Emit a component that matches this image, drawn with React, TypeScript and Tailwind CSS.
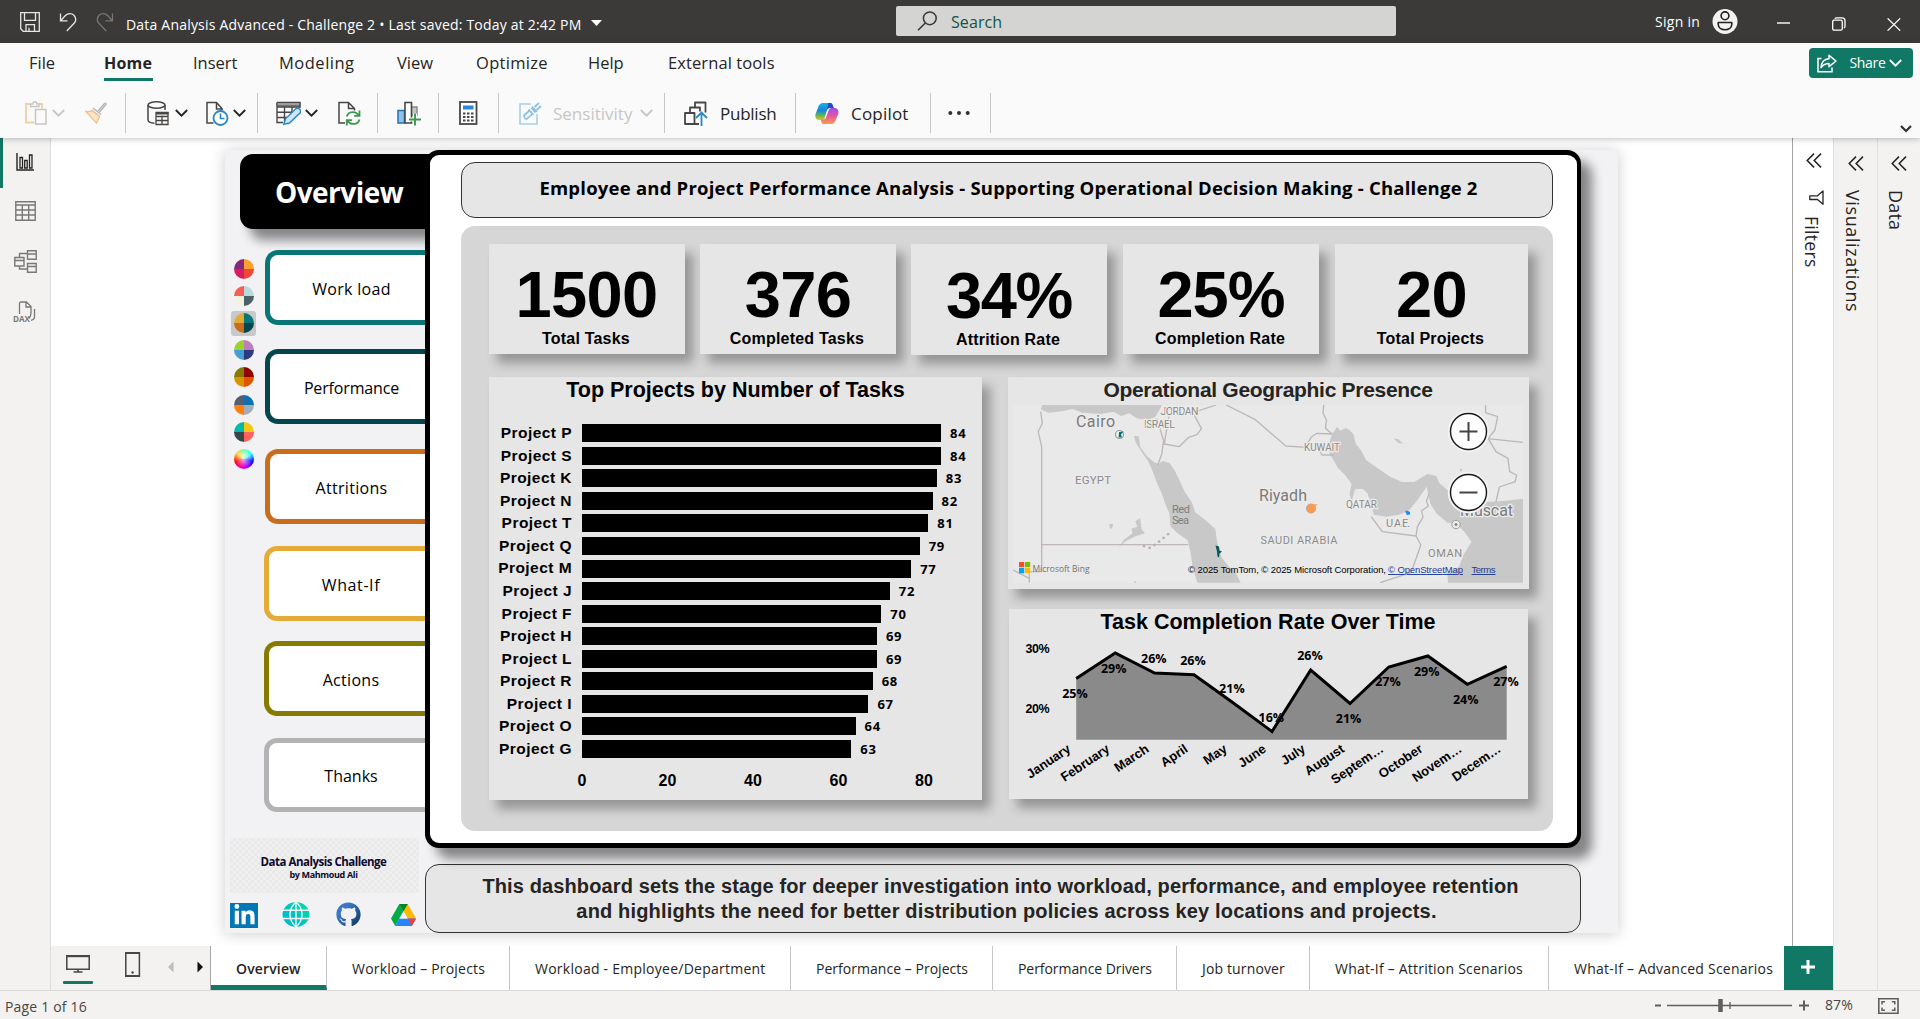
import React from "react";
import { FaGithub, FaLinkedinIn } from "react-icons/fa";

const OPEN = "font-['Open_Sans',sans-serif]";
const ARIAL = "font-['Liberation_Sans',sans-serif]";

type SvgProps = { w: number; h: number; children: React.ReactNode; className?: string };
const Svg = ({ w, h, children, className = "" }: SvgProps) => (
  <svg width={w} height={h} viewBox={`0 0 ${w} ${h}`} fill="none" className={`shrink-0 ${className}`}>
    {children}
  </svg>
);

/* ---------- Title bar ---------- */
function TitleBar() {
  return (
    <header className="flex h-[43px] shrink-0 items-start bg-[#3b3a39] text-white">
      <Svg w={20} h={20} className="mt-[12px] ml-[20px]">
        <path d="M.7.7h18.6v18.6H3.2L.7 16.8z M4.5.7v7.6h11V.7 M6 19.3v-6.6h8.5v6.6 M9 19v-3.3" stroke="#e6e6e6" strokeWidth="1.3" />
      </Svg>
      <Svg w={18} h={20} className="mt-[12px] ml-[19px]">
        <path d="M1.5 1.5v7.3h7 M1.8 8.5l4.6-5C9 1 12.800 1 14.900 3.300c2.100 2.400 2.200 5.700.200 8L7.800 19" stroke="#e6e6e6" strokeWidth="1.3" />
      </Svg>
      <Svg w={18} h={20} className="mt-[12px] ml-[19px]">
        <path d="M16.500 1.500v7.300h-7 M16.200 8.500l-4.600-5C9 1 5.200 1 3.100 3.300c-2.100 2.400-2.200 5.700-.200 8L10.200 19" stroke="#777674" strokeWidth="1.3" />
      </Svg>
      <span className="mt-[14px] ml-[12px] w-[464px] text-[14px] leading-[21px] tracking-[0.2px] whitespace-nowrap">
        Data Analysis Advanced - Challenge 2 • Last saved: Today at 2:42 PM
      </span>
      <Svg w={11} h={6} className="mt-[20px] ml-[1px]">
        <path d="M0 0h11L5.500 6z" fill="#fff" />
      </Svg>
      <div className="mt-[6px] ml-[294px] flex h-[30px] w-[500px] items-center rounded-[2px] bg-[#d4d4d2] pl-[21px]">
        <Svg w={21} h={20}>
          <circle cx="12.800" cy="7.300" r="6.400" stroke="#3b3a39" strokeWidth="1.500" />
          <path d="M8.300 12L1 19.300" stroke="#3b3a39" strokeWidth="1.600" />
        </Svg>
        <span className="ml-[13px] pt-px text-[16px] leading-[30px] tracking-[0.1px] text-[#0f5548]">Search</span>
      </div>
      <span className="mt-[11px] ml-[259px] w-[46px] text-[14px] leading-[22px] tracking-[0.3px] whitespace-nowrap">Sign in</span>
      <Svg w={26} h={26} className="mt-[9px] ml-[11px]">
        <circle cx="13" cy="12.500" r="12.500" fill="#f3f2f1" />
        <circle cx="13" cy="6.800" r="3.900" stroke="#222" strokeWidth="1.600" />
        <path d="M6.200 13.500h13.600v1.800c0 7.200-13.600 7.200-13.600 0z" stroke="#222" strokeWidth="1.600" strokeLinejoin="round" />
      </Svg>
      <Svg w={13} h={2} className="mt-[22px] ml-[39px]">
        <path d="M0 1h13" stroke="#fff" strokeWidth="1.400" />
      </Svg>
      <Svg w={14} h={14} className="mt-[17px] ml-[42px]">
        <rect x=".7" y="3.200" width="9.600" height="10" rx="1.500" stroke="#fff" strokeWidth="1.300" />
        <path d="M3 1.700Q3.300.8 4.500.8h5.500q3 0 3 3v5.500q0 1.200-1 1.700" stroke="#fff" strokeWidth="1.300" />
      </Svg>
      <Svg w={14} h={13} className="mt-[18px] ml-[41px]">
        <path d="M.6.4l12.600 12.200M13.200.4L.6 12.600" stroke="#fff" strokeWidth="1.300" />
      </Svg>
    </header>
  );
}

/* ---------- Ribbon ---------- */
const Chevron = ({ color = "#252423", className = "" }) => (
  <Svg w={13} h={8} className={className}>
    <path d="M.8 1l5.700 5.700L12.200 1" stroke={color} strokeWidth="1.800" />
  </Svg>
);
const Divider = ({ className = "" }) => <span className={`h-[40px] w-px shrink-0 bg-[#c8c6c4] ${className}`} />;

function MenuRow() {
  const item = "shrink-0 whitespace-nowrap";
  return (
    <nav className="flex h-[40px] items-start pl-[29px] text-[16.500px] leading-[40px] text-[#252423]">
      <span className={`${item} w-[75px]`}>File</span>
      <span className={`${item} w-[89px]`}>
        <span className="flex w-[49px] flex-col">
          <span className="h-[35px] text-[16px] font-bold tracking-[0.2px]">Home</span>
          <span className="h-[3px] bg-[#117865]" />
        </span>
      </span>
      <span className={`${item} w-[86px]`}>Insert</span>
      <span className={`${item} w-[118px] tracking-[0.5px]`}>Modeling</span>
      <span className={`${item} w-[79px]`}>View</span>
      <span className={`${item} w-[112px] tracking-[0.3px]`}>Optimize</span>
      <span className={`${item} w-[80px]`}>Help</span>
      <span className={`${item} tracking-[0.100px]`}>External tools</span>
      <button className="mt-[5px] mr-[7px] ml-auto flex h-[30px] w-[104px] items-center rounded-[4px] bg-[#117865] pl-[8px] text-[14px] leading-[30px] text-white">
        <Svg w={20} h={19}>
          <path d="M4.500 4.500H1v13.300h14v-4.300" stroke="#fff" strokeWidth="1.500" />
          <path d="M12 1.300l7 5.700-7 5.700V9.500c-3.600 0-6 1-8 4.200.300-5 3-8.600 8-9z" stroke="#fff" strokeWidth="1.500" strokeLinejoin="round" />
        </Svg>
        <span className="ml-[9px] w-[43px] tracking-[-0.300px]">Share</span>
        <Chevron color="#fff" className="mr-[9px]" />
      </button>
    </nav>
  );
}

function ToolRow() {
  const k = "#484644";
  return (
    <div className="flex h-[55px] items-start pt-[10px]">
      <div className="flex h-[40px] items-center pl-[25px] text-[17px] text-[#252423]">
        <Svg w={22} h={24}>
          <path d="M5.500 3H1v18.500h8 M13.500 3H17v4.500" stroke="#f0cfa6" strokeWidth="1.800" />
          <path d="M5.500 5.500V3h2.300c0-3 4-3 4 0H14v2.500z" stroke="#c8c6c4" strokeWidth="1.300" />
          <rect x="10.500" y="8.500" width="10.500" height="14.500" fill="#fafafa" stroke="#c8c6c4" strokeWidth="1.500" />
        </Svg>
        <Chevron color="#c8c6c4" className="ml-[5px]" />
        <Svg w={22} h={22} className="ml-[20px]">
          <path d="M13 9l6.500-7.500q1.500-.800 1.500 1L14.500 10 M8 6l8 6.500 M6.500 8l8 6.500" stroke="#b8b6b4" strokeWidth="1.400" />
          <path d="M7 8.500l7.500 6-3 6.500L.8 9.500q3.500.800 6.200-1z" fill="#fbe6cd" stroke="#eebf8c" strokeWidth="1.300" />
        </Svg>
        <Divider className="ml-[18px]" />
        <Svg w={22} h={25} className="ml-[21px]">
          <ellipse cx="9.500" cy="4" rx="8.500" ry="3.200" stroke={k} strokeWidth="1.500" />
          <path d="M1 4v15c0 1.800 3 3 6.500 3.200 M18 4v5" stroke={k} strokeWidth="1.500" />
          <path d="M9 11.500h12v12H9z M9 15.500h12 M9 19.500h12 M15 14.500v9" stroke={k} strokeWidth="1.300" fill="#fafafa" />
          <path d="M9 11h12.500v2.500H9z" fill={k} />
        </Svg>
        <Chevron className="ml-[6px]" />
        <Svg w={23} h={25} className="ml-[18px]">
          <path d="M7.500 22H1V1.500h9.500l5.500 6V9.500 M10.500 1.500v6.500H16" stroke={k} strokeWidth="1.500" />
          <circle cx="14.500" cy="17" r="7" fill="#fff" stroke="#2b88c8" strokeWidth="1.800" />
          <path d="M14.500 12.500V17.500H18.500" stroke="#2b88c8" strokeWidth="1.600" />
        </Svg>
        <Chevron className="ml-[4px]" />
        <Divider className="ml-[11px]" />
        <Svg w={25} h={25} className="ml-[18px]">
          <path d="M1 1.500h23v5.500M1 1.500v20h6 M1 6h23 M1 11.300h16 M1 16.500h10 M8.500 6v14 M16 6v6" stroke={k} strokeWidth="1.400" />
          <path d="M1 1.500h23V5H1z" fill="#a19f9d" stroke={k} />
          <path d="M7.800 23.300l1.700-5.500L20 7.500q2-1 3.700.800t.500 3.400L13.500 22z" fill="#cfe6f7" stroke="#2b88c8" strokeWidth="1.500" />
        </Svg>
        <Chevron className="ml-[4px]" />
        <Svg w={23} h={25} className="ml-[20px]">
          <path d="M7 22H1V1.500h9.500l6 6V9.500 M10.500 1.500v6H16.500" stroke={k} strokeWidth="1.500" />
          <path d="M8.800 15.500c1.500-5.500 9-6 12-1 M21.500 9.500v5.300h-5.300 M21.500 18.500c-1.500 5.500-9 6-12 1 M8.800 24.500v-5.300h5.300" stroke="#3b9a4e" strokeWidth="1.800" />
        </Svg>
        <Divider className="ml-[16px]" />
        <Svg w={24} h={25} className="ml-[19px]">
          <path d="M1 9.500h6.500V22H1z" fill="#8cc3ec" stroke="#2272b9" strokeWidth="1.500" />
          <path d="M13 6h7v8h-7z" fill="#c8c6c4" stroke="#8a8886" strokeWidth="1.400" />
          <path d="M8 1.500h6.500V22H8z" fill="#fff" stroke={k} strokeWidth="1.600" />
          <path d="M18 12.500V25 M12 18.500h12" stroke="#fafafa" strokeWidth="4" />
          <path d="M18 12.500V24.500 M12 18.500h12" stroke="#3b9a4e" strokeWidth="1.900" />
        </Svg>
        <Divider className="ml-[17px]" />
        <Svg w={19} h={24} className="ml-[20px]">
          <rect x="1" y="1" width="16.500" height="22" stroke={k} strokeWidth="1.800" fill="#fff" />
          <rect x="4" y="4.500" width="10.500" height="4" fill="#2b88d8" />
          <path d="M4 12.500h2.500m1.500 0h2.500m1.500 0h2.500 M4 16h2.500m1.500 0h2.500m1.500 0h2.500 M4 19.500h2.500m1.500 0h2.500m1.500 0h2.500" stroke={k} strokeWidth="2.200" />
        </Svg>
        <Divider className="ml-[20px]" />
        <Svg w={23} h={25} className="ml-[20px]">
          <path d="M12 3H1v20h17V13" stroke="#a9cfe8" strokeWidth="1.600" />
          <path d="M5 14.500l5.500-5 3 3.300-5.500 5q-2.500.500-3-3.300z M9.500 8.500l5 5.500 M12.500 7l4 4.500 M13 5.500l5 5.500 M15.500 6l4.500-4 M17.500 9l4.500-4" stroke="#8dbfe0" strokeWidth="1.700" />
        </Svg>
        <span className="ml-[11px] w-[80px] pt-px whitespace-nowrap text-[#c8c6c4]">Sensitivity</span>
        <Chevron color="#c8c6c4" className="ml-[7px]" />
        <Divider className="ml-[11px]" />
        <Svg w={24} h={25} className="ml-[19px]">
          <path d="M11 5.500V1.500h10.500v10 M6 11.500V6.500h10v4 M1 12h9.500v11H1z M10.500 23h4.500" stroke={k} strokeWidth="1.800" strokeLinejoin="round" />
          <path d="M17.500 25V12 M12 17l5.500-5.500L23 17" stroke="#2b88c8" strokeWidth="1.800" />
        </Svg>
        <span className="ml-[12px] w-[57px] pt-px tracking-[-0.250px]">Publish</span>
        <Divider className="ml-[18px]" />
        <Svg w={24} h={23} className="ml-[19px]">
          <defs>
            <linearGradient id="cpA" x1="0" y1="0" x2="0" y2="1">
              <stop offset="0" stopColor="#15b0e8" />
              <stop offset=".45" stopColor="#1b85d8" />
              <stop offset=".75" stopColor="#5dbb52" />
              <stop offset="1" stopColor="#f3c21b" />
            </linearGradient>
            <linearGradient id="cpB" x1="0" y1="0" x2="0" y2="1">
              <stop offset="0" stopColor="#9a50e8" />
              <stop offset=".5" stopColor="#e8559f" />
              <stop offset="1" stopColor="#f9a04a" />
            </linearGradient>
          </defs>
          <path d="M7.500 1h8.300q1.500.400 2 2.500l1 2.500H14q-1.500.300-2 2L9.500 16.500q-.600 1.500-2.500 1.500H3.500Q-.500 17 .6 12L3.800 3.500Q5 1 7.500 1z" fill="url(#cpA)" />
          <path d="M13 1h2.800q1.500.400 2 2.500l1 2.500H14.500q-1.500.100-2.200 2z" fill="#1f4fc4" />
          <path d="M16.500 22H8.200q-1.500-.400-2-2.500L5.500 17.500H9q1.500-.300 2-2L14 7.500Q14.600 6 16.500 6h4q3.500 1 2.900 5.500L20.200 19.500Q19 22 16.500 22z" fill="url(#cpB)" />
        </Svg>
        <span className="ml-[12px] w-[59px] pt-px tracking-[0.200px]">Copilot</span>
        <Divider className="ml-[20px]" />
        <Svg w={22} h={5} className="ml-[17px]">
          <circle cx="2.300" cy="2" r="2" fill="#323130" />
          <circle cx="11" cy="2" r="2" fill="#323130" />
          <circle cx="19.700" cy="2" r="2" fill="#323130" />
        </Svg>
        <Divider className="ml-[20px]" />
      </div>
      <Svg w={12} h={8} className="mt-[32px] mr-[8px] ml-auto">
        <path d="M1 1l5 5 5-5" stroke="#323130" strokeWidth="2.200" />
      </Svg>
    </div>
  );
}

/* ---------- Left rail ---------- */
function LeftRail() {
  return (
    <aside className="flex w-[51px] shrink-0 flex-col border-r border-[#dedcda] bg-[#f3f2f1]">
      <div className="h-[50px] border-l-[3px] border-[#117865] pt-[15px] pl-[13px]">
        <Svg w={18} h={18}>
          <path d="M1 0v17h17" stroke="#252423" strokeWidth="1.400" />
          <path d="M4 4.500h2.500V15H4z M8.700 7.500h2.500V15H8.700z M13.500 2H16v13h-2.500z" stroke="#252423" strokeWidth="1.300" />
        </Svg>
      </div>
      <Svg w={21} h={20} className="mt-[13px] ml-[15px]">
        <path d="M.8.8h19.400v18.400H.8z M.8 4h19.400 M.8 9h19.400 M.8 14h19.400 M7.300 4v15 M13.700 4v15" stroke="#7a7876" strokeWidth="1.400" />
      </Svg>
      <Svg w={23} h={23} className="mt-[29px] ml-[14px]">
        <path d="M.8 7.500h9.200v8.500H.8z M.8 10.500H10 M13.500 .8h8.700v8.400h-8.700z M13.500 4h8.700 M13.500 13.500h8.700v8.700h-8.700z M13.500 16.500h8.700 M5.500 7.500V3.500h8 M5.500 16v3h8" stroke="#7a7876" strokeWidth="1.400" />
      </Svg>
      <div className="mt-[28px] ml-[13px] flex h-[22px] w-[24px]">
        <Svg w={24} h={22}>
          <path d="M6.500 13V2.500Q6.500 1 8 1h5.500L18 5.500V12q0 3-2 5.500 M13 1v5h5 M21.500 8v8q0 2.500-3.500 3.300" stroke="#7a7876" strokeWidth="1.300" />
          <text x="0" y="20.500" fontSize="8" fontWeight="700" fill="#7a7876" textLength="17" lengthAdjust="spacingAndGlyphs" fontFamily="Open Sans">DAX</text>
        </Svg>
      </div>
    </aside>
  );
}

/* ---------- Report page: sidebar ---------- */
const themes: [string, string][] = [
  ["bg-[conic-gradient(#fb9f2e_0_25%,#f1473a_0_50%,#d91c62_0_75%,#86277a_0)]", ""],
  ["bg-[conic-gradient(#b9dada_0_25%,#4b6068_0_50%,#eff3df_0_75%,#f65f57_0)]", ""],
  ["bg-[conic-gradient(#0a7577_0_25%,#04464b_0_50%,#c96c1c_0_75%,#e3ac38_0)]", "bg-[#c8c8c8]"],
  ["bg-[conic-gradient(#c07dbc_0_25%,#2e3a80_0_50%,#459fd2_0_75%,#9cd134_0)]", ""],
  ["bg-[conic-gradient(#930000_0_25%,#e05500_0_50%,#d99200_0_75%,#867a00_0)]", ""],
  ["bg-[conic-gradient(#0f72b0_0_25%,#a3acba_0_50%,#ff7f0e_0_75%,#555f70_0)]", ""],
  ["bg-[conic-gradient(#f2c811_0_25%,#fd625e_0_50%,#374649_0_75%,#01b8aa_0)]", ""],
  ["bg-[radial-gradient(circle_at_50%_40%,#ffffffd0,#ffffff00_65%),conic-gradient(#5f8,#0ff,#00f,#a0f,#f0a,#f00,#fc0,#5f8)]", ""],
];

const navItems: [string, string][] = [
  ["Work load", "mt-[21px] border-[#0a7577] tracking-[0.300px]"],
  ["Performance", "mt-[24.500px] border-[#04464b] tracking-[-0.150px]"],
  ["Attritions", "mt-[25.500px] border-[#c96c1c] tracking-[0.300px]"],
  ["What-If", "-ml-px mt-[22.500px] border-[#e3ac38] tracking-[0.600px]"],
  ["Actions", "-ml-px mt-[20.500px] border-[#867a00] tracking-[0.300px]"],
  ["Thanks", "-ml-px mt-[22px] border-[#b3b3b3]"],
];

function ReportSidebar() {
  return (
    <div className="flex w-[200px] shrink-0 flex-col">
      <div className="mt-[4px] ml-[15px] flex h-[75px] w-[216px] shrink-0 items-center rounded-[13px] bg-black pl-[35px] text-[28px] font-bold tracking-[-0.550px] text-white shadow-[10px_11px_11px_rgba(0,0,0,0.450)]">
        <span className="mt-[1px]">Overview</span>
      </div>
      <div className="flex h-[609px]">
        <div className="flex w-[39px] shrink-0 flex-col items-start pt-[26.500px] pl-[6px]">
          {themes.map(([grad, sel], i) => (
            <div key={i} className="flex h-[27.100px] w-[25px] items-center">
              <div className={`flex h-[25px] w-[25px] items-center justify-center rounded-[3px] ${sel}`}>
                <div className={`h-[20px] w-[20px] rounded-full ${grad}`} />
              </div>
            </div>
          ))}
        </div>
        <div className="flex w-[161px] flex-col pl-px">
          {navItems.map(([label, cls]) => (
            <div key={label} className={`flex h-[74.500px] shrink-0 items-center justify-center rounded-l-[13px] border-[5px] border-r-0 bg-white pt-[3px] pl-[8px] text-[16px] text-black ${cls}`}>
              {label}
            </div>
          ))}
        </div>
      </div>
      <div className="ml-[5px] flex h-[55px] w-[189px] flex-col items-center bg-[repeating-conic-gradient(#e9e9ea_0_25%,#efeff0_0_50%)] bg-[length:6px_6px] pt-[15px] pr-[2px] font-bold text-[#0c0a2e]">
        <span className="text-[11.500px] leading-[17px] tracking-[-0.500px] whitespace-nowrap">Data Analysis Challenge</span>
        <span className="text-[9px] leading-[10px] tracking-[-0.350px] whitespace-nowrap">by Mahmoud Ali</span>
      </div>
      <div className="mt-[9px] flex items-start pl-[5px]">
        <div className="mt-px flex h-[25px] w-[28px] items-center justify-center bg-[#0277b5] text-white">
          <FaLinkedinIn size={23} />
        </div>
        <Svg w={28} h={25} className="ml-[24px]">
          <defs>
            <linearGradient id="globe" x1="0" y1="1" x2="1" y2="0">
              <stop offset="0" stopColor="#00aee0" />
              <stop offset="1" stopColor="#04df9a" />
            </linearGradient>
          </defs>
          <ellipse cx="14" cy="12.500" rx="13.500" ry="12.500" fill="url(#globe)" />
          <path d="M0 8.300h28 M0 16.500h28 M14 0v25 M14 0C6 7 6 18 14 25 M14 0c8 7 8 18 0 25" stroke="#f2f2f5" strokeWidth="1.400" />
        </Svg>
        <Svg w={0} h={0}>
          <defs>
            <linearGradient id="gh" x1="0" y1="0" x2="1" y2="1">
              <stop offset=".3" stopColor="#3c78c8" />
              <stop offset=".9" stopColor="#123d66" />
            </linearGradient>
          </defs>
        </Svg>
        <FaGithub size={25} className="ml-[26px] fill-[url(#gh)]" />
        <Svg w={25} h={22} className="mt-[2px] ml-[29.500px]">
          <path d="M8.300 0h8.400L8.500 14.500 4.200 22 0 14.500z" fill="#00ac47" />
          <path d="M16.700 0L25 14.500h-8.400L8.300 0z" fill="#ffba00" />
          <path d="M8.300 0h8.400l-4.200 7.300z" fill="#00832d" />
          <path d="M8.500 14.500H25L20.800 22H4.200z" fill="#2684fc" />
          <path d="M16.600 14.500H25L20.800 22z" fill="#ea4335" />
          <path d="M12.500 7.300l4.100 7.200H8.400z" fill="#f2f2f5" />
        </Svg>
      </div>
    </div>
  );
}

/* ---------- Report page: visuals ---------- */
const cardShadow = "shadow-[8px_9px_10px_rgba(0,0,0,0.300)]";

const kpis: [string, string, string, string][] = [
  ["1500", "Total Tasks", "w-[196px] h-[110px]", "tracking-[-0.600px] pr-px"],
  ["376", "Completed Tasks", "w-[196px] h-[110px] ml-[15px]", "tracking-[-0.600px]"],
  ["34%", "Attrition Rate", "w-[196px] h-[111px] ml-[15px] pt-px", "tracking-[-1.300px]"],
  ["25%", "Completion Rate", "w-[196px] h-[110px] ml-[16px]", "tracking-[-1px]"],
  ["20", "Total Projects", "w-[193px] h-[110px] ml-[16px]", "tracking-[-0.600px]"],
];

const projects: [string, number][] = [
  ["P", 84], ["S", 84], ["K", 83], ["N", 82], ["T", 81], ["Q", 79], ["M", 77], ["J", 72],
  ["F", 70], ["H", 69], ["L", 69], ["R", 68], ["I", 67], ["O", 64], ["G", 63],
];

function BarChart() {
  return (
    <div className={`flex h-[423px] w-[493px] shrink-0 flex-col bg-[#e6e6e6] font-bold text-black ${ARIAL} ${cardShadow}`}>
      <h2 className="text-center text-[21.500px] leading-[26px]">Top Projects by Number of Tasks</h2>
      <div className="mt-[19px] flex flex-col">
        {projects.map(([name, v]) => (
          <div key={name} className="flex h-[22.550px] items-center">
            <span className="w-[83px] pb-px text-right text-[15.500px] tracking-[0.450px] whitespace-nowrap">Project {name}</span>
            <div className="ml-[10px] h-[18px] bg-black" style={{ width: v * 4.275 }} />
            <span className={`ml-[9px] text-[13px] leading-[18px] tracking-[0.700px] ${OPEN}`}>{v}</span>
          </div>
        ))}
      </div>
      <div className="mt-[11px] ml-[50.250px] flex text-[16px] leading-[20px]">
        {[0, 20, 40, 60, 80].map((t) => (
          <span key={t} className="w-[85.500px] text-center">{t}</span>
        ))}
      </div>
    </div>
  );
}

function MapCard() {
  const halo = { stroke: "#ececec", strokeWidth: 2.5, paintOrder: "stroke" as const };
  return (
    <div className={`flex h-[212px] w-[521px] flex-col items-center bg-[#e6e6e6] ${cardShadow}`}>
      <h2 className={`pb-[2px] text-center text-[21px] leading-[26px] font-bold tracking-[-0.300px] text-[#252423] ${ARIAL}`}>Operational Geographic Presence</h2>
      <svg width="510" height="178" viewBox="1013 405 510 178" className="shrink-0 bg-[#e9e9e9]">
        <g transform="translate(1000 370) scale(0.34439 0.33333)">
          <g fill="#c8c8c8">
            <path d="M88 105h35L118 118 140 128 180 124 210 117 240 128 290 132 330 125 352 138 375 130 400 146 430 149 450 142 462 122 470 105z" />
            <path d="M388 197l7 22 17 28 18 26 13 30 12 34 15 34 10 30 12 30 3 38 20 20 30 22 8 34 6 44 14 49h126l-18-35-18-14-20-28-12-42-6-42-30-28-28-22-10-30-20-30-15-34-15-32-15-22-20-6-12 9-13-5-20-18-20-28-4-32z" />
            <path d="M965 192l14-22 8 12 10-4 8-4 10 6 12 14 6 28 16 20 14 28 36 26 34 24 34 16h36l38-24 26 6 8 20 26 24 8 26 32 14 60-5 70-5 49-6V638h-219l-2-30 34-18 12-34 24-40-20-30-26-26-24-2-32-28-18-30-6-30-4-20-24 36-26 34-30 14-38 6-36-6-8-34-10-30-14-14-22 2-10 36-6-22 6-30-20-28-20-20-24-44-4-24z" />
            <path d="M345 532l14-22 26-20-4-14 18-6-6-16 14-10 4 34 10 12-26 8-30 16z" />
            <path d="M317 462l12 0-4 14-6-2z M1143 205l14 3 14 14-16-4z M1335 296l6 0 0 8-5 0z M1390 150l10-8 0 5z" />
          </g>
          <g stroke="#bdb7ba" strokeWidth="3.900" fill="none" strokeLinejoin="round">
            <path d="M118 125l5 35-12 25 10 45v375 M121 524H547 M38 600l47 25v13 M85 638v-33h36" />
            <path d="M455 145l20 66-5 40-12 34 M490 140l-13 82 43 8 28-28 24-8 13-18-25-48 68-23 M657 105l83 43 90 80 60 4" />
            <path d="M940 105l-2 25 10 20-3 25 20 18 M885 232l20-32 15-10 44 2 M920 230l15 25h35" />
            <path d="M1410 105v23l35 12-8 40-20 26 54 6 48 5 M1418 206l22 39 35 20 5 40 20 10-4 20-46 16-10 45" />
            <path d="M1078 440l32 45 98 13 14 27-28 82-90 31 M1208 498l4-28 16-28-4-20 20-14-6-14 8-24" />
            <path d="M392 634v4" />
          </g>
          <path d="M418 528l18 6 22-16 40-34" stroke="#b7b1b4" strokeWidth="8" strokeLinecap="round" strokeDasharray="0.100 17" fill="none" />
        </g>
        <g fontFamily="Roboto" fill="#8a8a8a" {...halo}>
          <text x="1160.500" y="414.500" fontSize="10.500" textLength="38">JORDAN</text>
          <text x="1144" y="427.500" fontSize="10.500" textLength="31">ISRAEL</text>
          <text x="1304" y="451" fontSize="11" textLength="36" lengthAdjust="spacingAndGlyphs">KUWAIT</text>
          <text x="1075" y="484" fontSize="11.500" textLength="36">EGYPT</text>
          <text x="1346" y="508" fontSize="11" textLength="31" lengthAdjust="spacingAndGlyphs">QATAR</text>
          <text x="1386" y="527" fontSize="11" textLength="24">U.A.E.</text>
          <text x="1260.500" y="543.500" fontSize="11" textLength="77">SAUDI ARABIA</text>
          <text x="1428" y="556.500" fontSize="11" textLength="34">OMAN</text>
          <g stroke="none" fill="#7d7d7d">
            <text x="1172" y="513" fontSize="11" textLength="18">Red</text>
            <text x="1172" y="523.500" fontSize="11" textLength="17">Sea</text>
          </g>
          <g fontSize="16" fill="#7a7a7a">
            <text x="1076" y="426.500" textLength="39">Cairo</text>
            <text x="1259" y="500.500" textLength="48">Riyadh</text>
            <text x="1460" y="516" textLength="53">Muscat</text>
          </g>
        </g>
        <circle cx="1119.500" cy="434.500" r="4" fill="#f3f3f3" stroke="#999" strokeWidth="1.200" />
        <path d="M1119 432l4.500-.500-2.500 3 1 3h-3.500z" fill="#0a7577" />
        <circle cx="1311" cy="508.500" r="4.500" fill="#ff9a4d" stroke="#aaa" />
        <path d="M1309 505l8.500-1-3 3 .500 4-4 2.500-3-3z" fill="#ff9a4d" />
        <path d="M1215.500 545.500l3.500 1 .500 4 2.500 1-2.500 2-.500 4-1.500-1-.500-5z" fill="#04575b" />
        <path d="M1405 511.500l2-1 3 1.500v2.500l-3 .500z" fill="#118dff" />
        <circle cx="1456" cy="524.500" r="4.200" fill="#eee" stroke="#999" />
        <circle cx="1456" cy="524.500" r="1.500" fill="#888" />
        <g fill="#fff" stroke="#1a1a1a" strokeWidth="1.400">
          <circle cx="1468.500" cy="431.500" r="20" fill="#e9e9e9" stroke="#f3f3f3" strokeWidth="1.500" />
          <circle cx="1468.500" cy="431.500" r="18" />
          <circle cx="1468.500" cy="492.500" r="20" fill="#e9e9e9" stroke="#f3f3f3" strokeWidth="1.500" />
          <circle cx="1468.500" cy="492.500" r="18" />
          <path d="M1459.500 431.500h18M1468.500 422v19M1459.500 492.500h18" stroke="#444" strokeWidth="2" />
        </g>
        <path d="M1019 562h5.200v5.200h-5.200z" fill="#f25022" />
        <path d="M1025 562h5.200v5.200h-5.200z" fill="#7fba00" />
        <path d="M1019 568h5.200v5.200h-5.200z" fill="#00a4ef" />
        <path d="M1025 568h5.200v5.200h-5.200z" fill="#ffb900" />
        <text x="1032.500" y="571.500" fontSize="9.500" fontFamily="Open Sans" fill="#737373" textLength="57" lengthAdjust="spacingAndGlyphs">Microsoft Bing</text>
        <g fontFamily="Liberation Sans" fontSize="9.500" fill="#000">
          <text x="1188" y="573" textLength="198">© 2025 TomTom, © 2025 Microsoft Corporation,</text>
          <text x="1388" y="573" textLength="75" fill="#1f3a93" textDecoration="underline">© OpenStreetMap</text>
          <text x="1471.500" y="573" textLength="24" fill="#1f3a93" textDecoration="underline">Terms</text>
        </g>
      </svg>
    </div>
  );
}

const line: [number, number][] = [
  [1076.2, 678.5], [1115.2, 653], [1154.6, 673], [1194, 674.8], [1232.7, 702.5], [1272, 731.5],
  [1310.7, 670], [1350, 703.5], [1388.8, 667], [1427.9, 656], [1467.3, 684.3], [1506.7, 666.3],
];
const pct: [string, number, number][] = [
  ["25%", 1075, 698], ["29%", 1113.7, 672.5], ["26%", 1153.8, 662.7], ["26%", 1193, 664.5],
  ["21%", 1231.9, 692.7], ["16%", 1271.3, 721.7], ["26%", 1310, 659.5], ["21%", 1348.6, 722.7],
  ["27%", 1388, 685.7], ["29%", 1426.7, 675.5], ["24%", 1465.7, 703.7], ["27%", 1506, 685.7],
];
const months = ["January", "February", "March", "April", "May", "June", "July", "August", "Septem…", "October", "Novem…", "Decem…"];

function AreaChart() {
  const pts = line.map((p) => p.join(",")).join(" ");
  return (
    <div className={`mt-[20px] ml-[1px] flex h-[190px] w-[519px] flex-col bg-[#e6e6e6] ${cardShadow}`}>
      <h2 className={`pb-[1px] text-center text-[21.500px] leading-[27px] font-bold text-black ${ARIAL}`}>Task Completion Rate Over Time</h2>
      <svg width="519" height="162" viewBox="1009 637 519 162" className="shrink-0">
        <polygon points={`1076.200,739.700 ${pts} 1506.700,739.700`} fill="#8a8a8a" />
        <polyline points={pts} fill="none" stroke="#000" strokeWidth="3" />
        <g fontFamily="Liberation Sans" fontWeight="700" fontSize="12.500">
          <text x="1025.500" y="652.700" textLength="24">30%</text>
          <text x="1025.500" y="713" textLength="24">20%</text>
        </g>
        <g fontFamily="Open Sans" fontWeight="700" fontSize="12.500" textAnchor="middle">
          {pct.map(([t, x, y], i) => (
            <text key={i} x={x} y={y}>{t}</text>
          ))}
        </g>
        <g fontFamily="Liberation Sans" fontWeight="700" fontSize="13" textAnchor="end">
          {months.map((m, i) => {
            const x = 1071.5 + i * 39.12;
            return (
              <text key={m} x={x} y="751" transform={`rotate(-34 ${x} 751)`}>{m}</text>
            );
          })}
        </g>
      </svg>
    </div>
  );
}

function ReportMain() {
  return (
    <div className="flex w-[1156px] shrink-0 flex-col">
      <div className="relative z-10 flex h-[698px] shrink-0 flex-col rounded-[14px] border-[5px] border-r-[4px] border-black bg-white pt-[7px] pr-[24px] pl-[31px] shadow-[11px_11px_11px_rgba(0,0,0,0.450)]">
        <h1 className="flex h-[55.500px] shrink-0 items-center justify-center rounded-[14px] border border-[#333] bg-[#e6e6e6] pb-[3px] pl-[3px] text-[18.500px] font-bold tracking-[0.220px] whitespace-nowrap text-black">
          Employee and Project Performance Analysis - Supporting Operational Decision Making - Challenge 2
        </h1>
        <div className="mt-[8.500px] flex h-[605px] shrink-0 flex-col rounded-[14px] bg-[#d6d6d6] pt-[18px] pl-[28px]">
          <div className={`flex h-[110px] items-start font-bold text-black ${ARIAL}`}>
            {kpis.map(([num, label, cls, numCls]) => (
              <div key={label} className={`flex shrink-0 flex-col items-center bg-[#e6e6e6] ${cls} ${cardShadow}`}>
                <span className={`mt-[18px] text-[65px] leading-[65px] ${numCls}`}>{num}</span>
                <span className="mt-[2px] pr-[2px] text-[16px] leading-[20px] tracking-[0.200px] whitespace-nowrap">{label}</span>
              </div>
            ))}
          </div>
          <div className="mt-[23px] flex">
            <BarChart />
            <div className="ml-[25.500px] flex flex-col">
              <MapCard />
              <AreaChart />
            </div>
          </div>
        </div>
      </div>
      <p className={`mt-[16px] flex h-[69px] shrink-0 flex-col items-center justify-center rounded-[14px] border border-[#333] bg-[#e6e6e6] text-[20px] leading-[25px] font-bold tracking-[0.120px] whitespace-nowrap text-[#252423] ${ARIAL}`}>
        <span className="-ml-[5px]">This dashboard sets the stage for deeper investigation into workload, performance, and employee retention</span>
        <span className="ml-[7px] tracking-[0.160px]">and highlights the need for better distribution policies across key locations and projects.</span>
      </p>
    </div>
  );
}

/* ---------- Side panes ---------- */
const DoubleChevron = ({ className = "" }) => (
  <Svg w={16} h={15} className={className}>
    <path d="M8 .6L1.200 7.500 8 14.400 M15 .6L8.200 7.500 15 14.400" stroke="#252423" strokeWidth="1.500" />
  </Svg>
);
const vertical = "[writing-mode:vertical-rl] whitespace-nowrap leading-[22px] text-[#252423]";

/* ---------- Page tabs ---------- */
const tabs: [string, string][] = [
  ["Workload – Projects", "w-[183px] pl-[25px] tracking-[0.200px]"],
  ["Workload - Employee/Department", "w-[281px] pl-[25px] tracking-[0.250px]"],
  ["Performance – Projects", "w-[202px] pl-[25px] tracking-[0.030px]"],
  ["Performance Drivers", "w-[184px] pl-[25px] tracking-[-0.060px]"],
  ["Job turnover", "w-[133px] pl-[25px] tracking-[0.140px]"],
  ["What-If – Attrition Scenarios", "w-[239px] pl-[25px] tracking-[0.210px]"],
];

function TabStrip() {
  return (
    <div className="flex h-[44px] shrink-0 bg-white text-[14px] leading-[20px] text-[#252423]">
      <div className="flex w-[160px] shrink-0 items-start border-r border-[#a8a6a4] bg-[#f3f2f1]">
        <div className="ml-[12px] flex w-[30px] flex-col items-center pt-[9px]">
          <Svg w={24} h={18}>
            <path d="M.8.8h22.400v13.400H.8z" stroke="#484644" strokeWidth="1.500" />
            <path d="M0 1.200h24" stroke="#484644" strokeWidth="2" />
            <path d="M12 14v3 M7.500 17h9" stroke="#484644" strokeWidth="1.600" />
          </Svg>
          <span className="mt-[8px] h-[3px] w-full rounded-[1px] bg-[#117865]" />
        </div>
        <Svg w={16} h={25} className="mt-[6px] ml-[32px]">
          <rect x=".8" y=".8" width="13.600" height="23.400" stroke="#484644" strokeWidth="1.500" />
          <path d="M0 1h15M0 24h15" stroke="#484644" strokeWidth="2" />
          <circle cx="7.600" cy="20.500" r="1.200" fill="#484644" />
        </Svg>
        <Svg w={6} h={12} className="mt-[15px] ml-[27px]">
          <path d="M5.500.5v11L0 6z" fill="#c0bebc" />
        </Svg>
        <Svg w={6} h={12} className="mt-[15px] ml-[23px]">
          <path d="M.5.5v11L6 6z" fill="#111" />
        </Svg>
      </div>
      <div className="w-[116px] shrink-0 border-r border-b-[5px] border-[#117865] border-r-[#c8c6c4] pt-[13px] pl-[25px] font-semibold tracking-[0.150px]">Overview</div>
      {tabs.map(([t, cls]) => (
        <div key={t} className={`shrink-0 border-r border-[#c8c6c4] pt-[13px] whitespace-nowrap ${cls}`}>{t}</div>
      ))}
      <div className="w-[235px] shrink-0 pt-[13px] pl-[25px] tracking-[0.250px] whitespace-nowrap">What-If – Advanced Scenarios</div>
      <div className="flex flex-1 items-center justify-center bg-[#117865]">
        <Svg w={14} h={14} className="mr-px mb-[3px]">
          <path d="M7 0v14M0 7h14" stroke="#fff" strokeWidth="3" />
        </Svg>
      </div>
    </div>
  );
}

function StatusBar() {
  return (
    <footer className="flex h-[29px] shrink-0 items-start border-t border-[#dbd9d7] bg-[#f3f2f1] text-[14px] leading-[20px] text-[#484644]">
      <span className="mt-[6px] ml-[5px] tracking-[0.180px]">Page 1 of 16</span>
      <Svg w={154} h={16} className="mt-[7px] ml-auto">
        <path d="M0 7.500h6" stroke="#605e5c" strokeWidth="2" />
        <path d="M12 7.500h125" stroke="#605e5c" strokeWidth="1.300" />
        <path d="M65.500 1v13" stroke="#605e5c" strokeWidth="4.500" />
        <path d="M75 4v7" stroke="#605e5c" strokeWidth="1.300" />
        <path d="M144 7.500h10M149 2.500v10" stroke="#605e5c" strokeWidth="2" />
      </Svg>
      <span className="mt-[4px] ml-[16px] w-[28px] tracking-[0.100px]">87%</span>
      <Svg w={21} h={16} className="mt-[7px] mr-[21px] ml-[25px]">
        <path d="M.8.8h19.200v14.400H.8z" stroke="#605e5c" strokeWidth="1.600" />
        <path d="M4 6.500V3.800h3 M13.800 3.800h3V6.500 M16.800 9.500v2.700h-3 M7 12.200H4V9.500" stroke="#605e5c" strokeWidth="1.500" />
      </Svg>
    </footer>
  );
}

export default function App() {
  return (
    <div className={`flex h-[1019px] w-[1920px] flex-col overflow-hidden bg-white ${OPEN}`}>
      <TitleBar />
      <div className="relative z-20 h-[95px] shrink-0 bg-[#fafafa] shadow-[0_1px_6px_rgba(0,0,0,0.250)]">
        <MenuRow />
        <ToolRow />
      </div>
      <div className="flex h-[852px] shrink-0">
        <LeftRail />
        <div className="flex w-[1782px] shrink-0 flex-col">
          <div className="flex h-[808px] shrink-0">
            <div className="w-[1741px] shrink-0 overflow-hidden pt-[12px] pl-[174px]">
              <div className="flex h-[783px] w-[1393px] bg-[#f2f2f5] shadow-[0_1px_14px_rgba(0,0,0,0.200)]">
                <ReportSidebar />
                <ReportMain />
              </div>
            </div>
            <aside className="flex w-[41px] flex-col items-center border-l border-[#a6a4a2] bg-white pt-[15px]">
              <DoubleChevron className="ml-[1px]" />
              <Svg w={15} h={15} className="mt-[22px] ml-[6px]">
                <path d="M14 1v13.300L8.500 9.500H.8V5.800H8.500z" stroke="#252423" strokeWidth="1.300" strokeLinejoin="round" />
              </Svg>
              <span className={`mt-[11px] mr-[2px] text-[17.500px] tracking-[0.300px] ${vertical}`}>Filters</span>
            </aside>
          </div>
          <TabStrip />
        </div>
        <aside className="flex w-[44px] shrink-0 flex-col items-center border-l border-[#e1dfdd] bg-[#f3f2f1] pt-[18px]">
          <DoubleChevron />
          <span className={`mt-[19px] mr-[6px] text-[18px] tracking-[0.600px] ${vertical}`}>Visualizations</span>
        </aside>
        <aside className="flex w-[43px] shrink-0 flex-col items-center border-l border-[#e1dfdd] bg-[#f3f2f1] pt-[18px]">
          <DoubleChevron />
          <span className={`mt-[19px] mr-[6px] text-[18px] tracking-[0.200px] ${vertical}`}>Data</span>
        </aside>
      </div>
      <StatusBar />
    </div>
  );
}
